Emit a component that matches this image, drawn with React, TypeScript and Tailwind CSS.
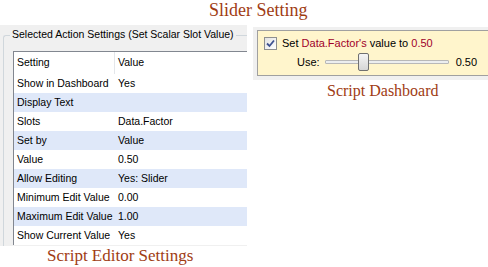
import React from 'react';

const rows: [string, string][] = [
  ['Show in Dashboard', 'Yes'],
  ['Display Text', ''],
  ['Slots', 'Data.Factor'],
  ['Set by', 'Value'],
  ['Value', '0.50'],
  ['Allow Editing', 'Yes: Slider'],
  ['Minimum Edit Value', '0.00'],
  ['Maximum Edit Value', '1.00'],
  ['Show Current Value', 'Yes'],
];

const Check: React.FC = () => (
  <div className="w-[13px] h-[13px] border border-[#8e8f8f] bg-gradient-to-br from-[#e2e2e2] to-white flex items-center justify-center">
    <svg width="11" height="11" viewBox="0 0 11 11">
      <path d="M2 5.5 L4.5 8 L9 2.5" fill="none" stroke="#3e5290" strokeWidth="1.8" />
    </svg>
  </div>
);

const App: React.FC = () => {
  return (
    <div className="w-[488px] h-[267px] bg-white overflow-hidden font-['Liberation_Sans',Arial,sans-serif] text-[11px] text-black">
      <div className="h-[25px] pl-[209px] font-['Liberation_Serif','Times_New_Roman',serif] text-[18px] leading-[20px] text-[#a03c14]">
        Slider Setting
      </div>

      <div className="flex">
        {/* script editor */}
        <div className="w-[247px] flex flex-col">
          <div className="h-[221px] bg-[#f0f0f0] overflow-hidden pt-[10px] pl-[3px] text-[10.5px]">
            <div className="relative w-[280px] h-[300px] border-l border-t border-[#d0d7dc] rounded-tl-[3px] pl-[9px] pt-[15px]">
              <span className="absolute left-[6px] -top-[8px] px-[2px] bg-[#f0f0f0] leading-[13px] whitespace-nowrap">
                Selected Action Settings (Set Scalar Slot Value)
              </span>
              <div className="bg-white border-l border-t border-[#828790]">
                <div className="flex h-[22px] items-center">
                  <div className="w-[101px] h-full flex items-center pl-[3px] border-r border-[#e3e6ea]">Setting</div>
                  <div className="pl-[3px]">Value</div>
                </div>
                {rows.map(([k, v], i) => (
                  <div key={k} className={`flex h-[19px] items-center ${i % 2 === 1 ? 'bg-[#dfe8f9]' : 'bg-white'}`}>
                    <div className="w-[101px] pl-[3px] whitespace-nowrap">{k}</div>
                    <div className="pl-[3px] whitespace-nowrap">{v}</div>
                  </div>
                ))}
              </div>
            </div>
          </div>
          <div className="h-[20px] pl-[47px] font-['Liberation_Serif','Times_New_Roman',serif] text-[17px] leading-[20px] text-[#a03c14] whitespace-nowrap">
            Script Editor Settings
          </div>
        </div>

        {/* dashboard */}
        <div className="flex-1 ml-[6px] mt-[2px] flex flex-col">
          <div className="h-[53px] bg-[#f0f0f0] pt-[3px] pl-[4px] pb-[4px]">
            <div className="h-[46px] bg-[#fff5cc] border-l border-t border-b border-[#a0a0a0] pl-[6px] pt-[6px] flex flex-col">
              <div className="flex items-center h-[13px]">
                <Check />
                <span className="ml-[5px] whitespace-nowrap">
                  Set <span className="text-[#a0002a]">Data.Factor's</span> value to <span className="text-[#a0002a]">0.50</span>
                </span>
              </div>
              <div className="flex items-center h-[18px] mt-[3px] pl-[33px]">
                <span>Use:</span>
                <div className="relative ml-[5px] w-[124px] h-[18px] flex items-center">
                  <div className="w-full h-[4px] bg-[#eceeef] border border-[#b8b8b8] rounded-[1px]" />
                  <div className="absolute left-[33px] top-0 w-[11px] h-[18px] rounded-[2px] border border-[#707070] bg-gradient-to-b from-[#f5f5f5] to-[#d6d6d6]" />
                </div>
                <span className="ml-[7px]">0.50</span>
              </div>
            </div>
          </div>
          <div className="mt-[1px] pl-[74px] font-['Liberation_Serif','Times_New_Roman',serif] text-[16px] leading-[20px] text-[#a03c14] whitespace-nowrap">
            Script Dashboard
          </div>
        </div>
      </div>
    </div>
  );
};

export default App;
